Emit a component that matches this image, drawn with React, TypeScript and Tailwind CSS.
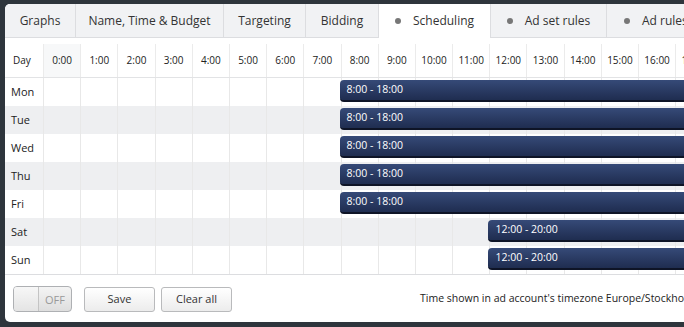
import React from 'react';

const tabs = [
  { label: 'Graphs', w: 'w-[70px] justify-center' },
  { label: 'Name, Time & Budget', w: 'w-[148px] justify-center' },
  { label: 'Targeting', w: 'w-[82px] justify-center' },
  { label: 'Bidding', w: 'w-[73px] justify-center' },
  { label: 'Scheduling', w: 'w-[112px] justify-center', dot: true, active: true },
  { label: 'Ad set rules', w: 'w-[116px] justify-center', dot: true },
  { label: 'Ad rules', w: 'w-[120px] justify-start pl-[17px]', dot: true },
];

const hours = Array.from({ length: 24 }, (_, i) => `${i}:00`);

const days = [
  { name: 'Mon', from: 8, to: 18 },
  { name: 'Tue', from: 8, to: 18 },
  { name: 'Wed', from: 8, to: 18 },
  { name: 'Thu', from: 8, to: 18 },
  { name: 'Fri', from: 8, to: 18 },
  { name: 'Sat', from: 12, to: 20 },
  { name: 'Sun', from: 12, to: 20 },
];

const COL = 37.2;
const DAYCOL = 38;

function Tabs() {
  return (
    <div className="flex h-[34px] shrink-0 bg-[#f1f2f4] rounded-t-[5px]">
      {tabs.map((t, i) => (
        <div
          key={t.label}
          className={`${t.w} flex items-center gap-[12px] text-[12px] text-[#333] ${
            t.active ? 'bg-white' : 'border-b border-[#dcdde0]'
          } ${i > 0 ? 'border-l border-[#dcdde0]' : ''} ${i === 0 ? 'rounded-tl-[5px]' : ''}`}
        >
          {t.dot && <span className="w-[6px] h-[6px] rounded-full bg-[#777]" />}
          <span className="whitespace-nowrap">{t.label}</span>
        </div>
      ))}
      <div className="flex-1 border-b border-l border-[#dcdde0]" />
    </div>
  );
}

function Header() {
  return (
    <div className="flex pt-[6px] h-[40px] shrink-0 border-b border-[#e2e3e5]">
      <div className="w-[38px] flex items-center pl-[8px] text-[10px] text-[#222]">Day</div>
      {hours.map((h, i) => (
        <div
          key={h}
          className={`w-[37.2px] shrink-0 flex items-center justify-center text-[10px] text-[#222] border-l border-[#ebebeb] ${
            i === 0 ? 'bg-[#f7f8f9]' : ''
          }`}
        >
          {h}
        </div>
      ))}
    </div>
  );
}

function Row({ name, from, to, odd }: { name: string; from: number; to: number; odd: boolean }) {
  return (
    <div className={`relative flex h-[28px] shrink-0 ${odd ? 'bg-[#eeeff1]' : 'bg-white'}`}>
      <div className="w-[38px] flex items-center pl-[6px] text-[11px] text-[#222]">{name}</div>
      {hours.map((h) => (
        <div key={h} className="w-[37.2px] shrink-0 border-l border-[#e8e8e8]" />
      ))}
      <div
        className="absolute top-[2px] h-[22px] rounded-[4px] bg-gradient-to-b from-[#364a78] to-[#1f2d50] border-b-2 border-[#0e1426] flex items-center pl-[7px] text-[10.5px] text-white"
        style={{ left: DAYCOL + from * COL - 1, width: (to - from) * COL }}
      >
        {`${from}:00 - ${to}:00`}
      </div>
    </div>
  );
}

function Footer() {
  return (
    <div className="flex items-center h-[47px] pl-[8px] pt-[1px]">
      <div className="flex w-[59px] h-[26px] rounded-[4px] border border-[#aeb0b3] bg-gradient-to-b from-[#f4f4f4] to-[#dedede] overflow-hidden">
        <div className="w-[25px] h-full bg-gradient-to-b from-[#f7f7f7] to-[#e4e4e4] border-r border-[#c4c4c4]" />
        <div className="flex-1 flex items-center justify-center text-[11px] text-[#999] pt-[2px]">OFF</div>
      </div>
      <button className="ml-[12px] w-[71px] h-[25px] rounded-[3px] border border-[#b9babc] bg-gradient-to-b from-white to-[#ececec] text-[11px] text-[#333]">
        Save
      </button>
      <button className="ml-[6px] w-[71px] h-[25px] rounded-[3px] border border-[#b9babc] bg-gradient-to-b from-white to-[#ececec] text-[11px] text-[#333]">
        Clear all
      </button>
      <div className="ml-[188px] whitespace-nowrap text-[10.5px] text-[#222]">
        Time shown in ad account's timezone Europe/Stockholm
      </div>
    </div>
  );
}

export default function App() {
  return (
    <div
      className="w-[684px] h-[327px] bg-[#2e353c] overflow-hidden pt-[4px] pl-[5px]"
      style={{ fontFamily: '"Open Sans", "Noto Sans", sans-serif' }}
    >
      <div className="w-[940px] h-[318px] bg-white rounded-[5px] flex flex-col">
        <Tabs />
        <Header />
        <div className="flex flex-col border-b border-[#dcdde0]">
          {days.map((d, i) => (
            <Row key={d.name} name={d.name} from={d.from} to={d.to} odd={i % 2 === 1} />
          ))}
        </div>
        <Footer />
      </div>
    </div>
  );
}
